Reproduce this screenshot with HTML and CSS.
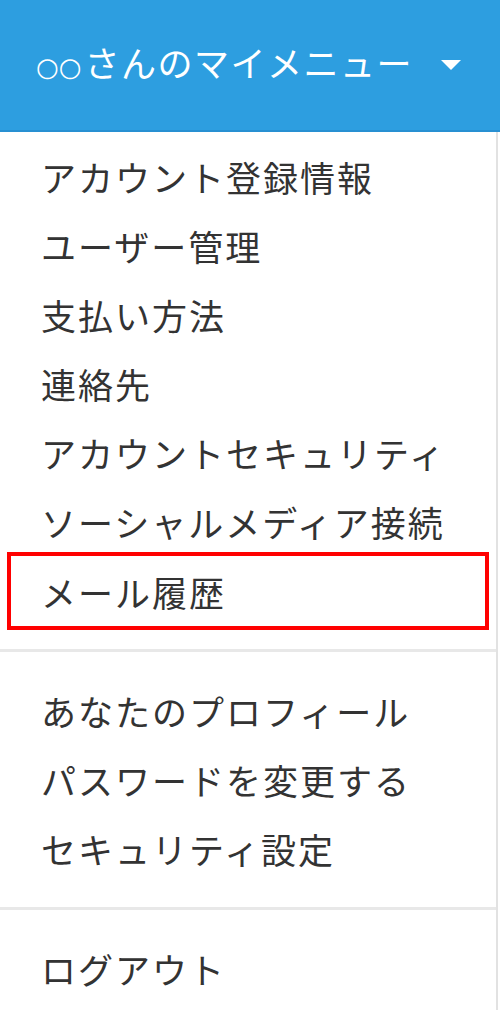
FILE: index.html
```html
<!DOCTYPE html>
<html lang="ja">
<head>
    <meta charset="UTF-8">
    <meta name="viewport" content="width=device-width, initial-scale=1.0">
    <title>マイメニュー</title>
    <link rel="stylesheet" href="styles.css">
</head>
<body>

    <!-- Header -->
    <header class="menu-header">
        <span class="menu-title"><span class="name-mark">○○</span>さんのマイメニュー</span>
        <span class="caret"></span>
    </header>

    <!-- Menu -->
    <nav class="menu">
        <ul class="menu-group first">
            <li><a href="#">アカウント登録情報</a></li>
            <li><a href="#">ユーザー管理</a></li>
            <li><a href="#">支払い方法</a></li>
            <li><a href="#">連絡先</a></li>
            <li><a href="#">アカウントセキュリティ</a></li>
            <li><a href="#">ソーシャルメディア接続</a></li>
            <li class="marked"><a href="#">メール履歴</a></li>
        </ul>
        <hr class="divider">
        <ul class="menu-group">
            <li><a href="#">あなたのプロフィール</a></li>
            <li><a href="#">パスワードを変更する</a></li>
            <li><a href="#">セキュリティ設定</a></li>
        </ul>
        <hr class="divider">
        <ul class="menu-group">
            <li><a href="#">ログアウト</a></li>
        </ul>
    </nav>

</body>
</html>
```

FILE: styles.css
```css
/* Global Styles */
* {
    margin: 0;
    padding: 0;
    box-sizing: border-box;
    font-family: "Noto Sans CJK JP", "Noto Sans", sans-serif;
}

body {
    background: #fff;
    color: #333;
    width: 500px;
    height: 1010px;
    overflow: hidden;
}

/* Header */
.menu-header {
    height: 132px;
    background: #2d9ee0;
    border-bottom: 2px solid #2890d2;
    display: flex;
    align-items: center;
    padding: 0 39px 6px 36px;
    color: #fff;
}

.menu-title {
    flex: 1;
    font-size: 35px;
    letter-spacing: 1.5px;
    line-height: 1;
}

.name-mark {
    font-family: "DejaVu Sans", sans-serif;
    font-size: 26px;
    letter-spacing: 0;
    margin-right: 3px;
    vertical-align: 1px;
}

.caret {
    width: 0;
    height: 0;
    border-left: 10px solid transparent;
    border-right: 10px solid transparent;
    border-top: 10px solid #fff;
    margin-top: 6px;
}

/* Menu */
.menu {
    border-right: 2px solid #e2e2e2;
    margin-right: 2px;
    height: 878px;
}

.menu-group {
    list-style: none;
}

.menu-group.first {
    padding-top: 10px;
}

.menu-group li {
    height: 69px;
    display: flex;
    align-items: center;
    padding-left: 41px;
}

.menu-group a {
    color: #333;
    text-decoration: none;
    font-size: 35px;
    letter-spacing: 2px;
    line-height: 1;
}

.menu-group li.marked {
    outline: 4px solid #f00;
    outline-offset: -2px;
    margin: 0 9px;
    padding-left: 32px;
    height: 74px;
    margin-top: -2px;
    margin-bottom: -3px;
}

.divider {
    border: none;
    height: 3px;
    background: #e8e8e8;
    margin: 24px 0;
}
```
